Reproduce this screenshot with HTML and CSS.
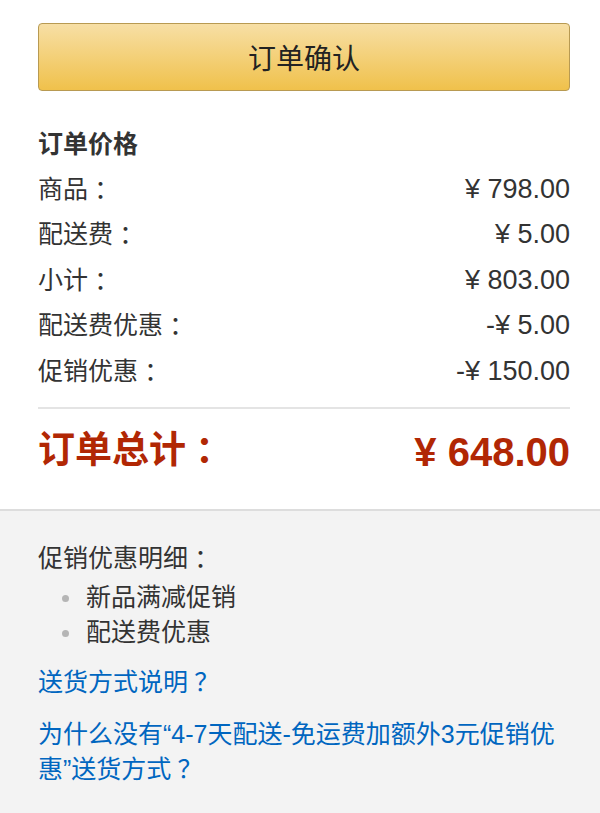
FILE: index.html
```html
<!DOCTYPE html>
<html lang="zh-CN">
<head>
    <meta charset="UTF-8">
    <meta name="viewport" content="width=device-width, initial-scale=1.0">
    <title>订单确认</title>
    <link rel="stylesheet" href="styles.css">
</head>
<body>
    <div class="summary">
        <button class="confirm-button">订单确认</button>

        <h3 class="summary-title">订单价格</h3>
        <div class="price-row"><span>商品<span class="fw">：</span></span><span class="amount">¥ 798.00</span></div>
        <div class="price-row"><span>配送费<span class="fw">：</span></span><span class="amount">¥ 5.00</span></div>
        <div class="price-row"><span>小计<span class="fw">：</span></span><span class="amount">¥ 803.00</span></div>
        <div class="price-row"><span>配送费优惠<span class="fw">：</span></span><span class="amount">-¥ 5.00</span></div>
        <div class="price-row"><span>促销优惠<span class="fw">：</span></span><span class="amount">-¥ 150.00</span></div>

        <div class="total-row"><span>订单总计<span class="fw">：</span></span><span class="amount">¥ 648.00</span></div>
    </div>

    <div class="promo-info">
        <div class="promo-title">促销优惠明细<span class="fw">：</span></div>
        <ul class="promo-list">
            <li>新品满减促销</li>
            <li>配送费优惠</li>
        </ul>
        <a class="info-link" href="#">送货方式说明<span class="fw">？</span></a>
        <a class="info-link" href="#">为什么没有“4-7天配送-免运费加额外3元促销优惠”送货方式<span class="fw">？</span></a>
    </div>
</body>
</html>
```

FILE: styles.css
```css
body {
    margin: 0;
    background: #fff;
    color: #333;
    font-family: "Liberation Sans", "Noto Sans CJK SC", sans-serif;
}

/* 全角标点：取窄字形后在一个字宽内居中 */
.fw {
    display: inline-block;
    width: 1em;
    text-align: center;
    font-feature-settings: "palt";
    line-height: 1;
}

.summary {
    padding: 23px 30px 27px 38px;
}

.confirm-button {
    display: block;
    width: 100%;
    height: 68px;
    border: 1px solid #b89a52;
    border-radius: 4px;
    background: linear-gradient(to bottom, #f7dfa5, #f0c14b);
    color: #222;
    font-family: inherit;
    font-size: 28px;
    cursor: pointer;
}

.summary-title {
    margin: 31px 0 0;
    height: 44px;
    font-size: 25px;
    line-height: 44px;
    font-weight: bold;
}

.price-row {
    display: flex;
    justify-content: space-between;
    align-items: center;
    height: 45.5px;
    font-size: 25px;
    line-height: 1.2;
}

.price-row .amount {
    font-size: 27px;
}

.total-row {
    display: flex;
    justify-content: space-between;
    align-items: center;
    height: 60px;
    margin-top: 13px;
    padding-top: 13px;
    border-top: 2px solid #e4e4e4;
    color: #b12704;
    font-size: 37px;
    font-weight: bold;
    line-height: 1.2;
}

.total-row .amount {
    font-size: 40px;
}

/* 促销明细区域 */
.promo-info {
    border-top: 2px solid #ddd;
    background: #f3f3f3;
    padding: 30px 30px 30px 38px;
    font-size: 25px;
    line-height: 35px;
}

.promo-title {
    height: 35px;
}

.promo-list {
    margin: 4px 0 15px;
    padding-left: 48px;
    list-style: none;
}

.promo-list li {
    position: relative;
    height: 35px;
}

.promo-list li::before {
    content: "";
    position: absolute;
    left: -24px;
    top: 15px;
    width: 7px;
    height: 7px;
    border-radius: 50%;
    background: #b5b5b5;
}

.info-link {
    display: block;
    color: #0066c0;
    text-decoration: none;
    margin-bottom: 17px;
}
```
